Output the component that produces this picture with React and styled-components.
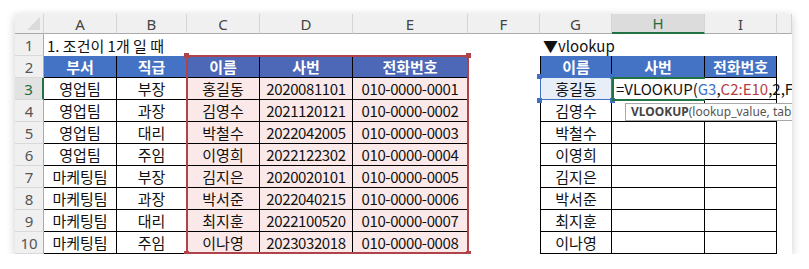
import React from 'react'
import styled, { createGlobalStyle, css } from 'styled-components'

const GlobalStyle = createGlobalStyle`
  body {
    margin: 0;
    background: #fff;
    font-family: "Noto Sans CJK KR", "Noto Sans", sans-serif;
  }
`

const COLS = [29, 73, 70, 73, 93, 115, 72, 72, 93, 72, 15]
const LETTERS = ['A', 'B', 'C', 'D', 'E', 'F', 'G', 'H', 'I', '']

const people = [
  ['영업팀', '부장', '홍길동', '2020081101', '010-0000-0001'],
  ['영업팀', '과장', '김영수', '2021120121', '010-0000-0002'],
  ['영업팀', '대리', '박철수', '2022042005', '010-0000-0003'],
  ['영업팀', '주임', '이영희', '2022122302', '010-0000-0004'],
  ['마케팅팀', '부장', '김지은', '2020020101', '010-0000-0005'],
  ['마케팅팀', '과장', '박서준', '2022040215', '010-0000-0006'],
  ['마케팅팀', '대리', '최지훈', '2022100520', '010-0000-0007'],
  ['마케팅팀', '주임', '이나영', '2023032018', '010-0000-0008'],
]

// every grid item sits at its own row / column
const placed = css`
  grid-column: ${({ $col }) => $col};
  grid-row: ${({ $row }) => $row};
`

const Frame = styled.div`
  margin: 14px 0 0 15px;
  width: 777px;
  height: 240px;
  overflow: hidden;
  background: #fff;
  box-shadow: 0 2px 9px rgba(0, 0, 0, 0.2);
`

const Sheet = styled.div`
  display: grid;
  grid-template-columns: ${COLS.map((c) => c + 'px').join(' ')};
  grid-template-rows: 20px repeat(10, 22px);
  font-size: 15px;
  color: #111;
`

const Corner = styled.div`
  ${placed}
  position: relative;
  background: #f0f0f0;
  border-right: 1px solid #d4d4d4;
  border-bottom: 1px solid #ababab;
  &::after {
    content: '';
    position: absolute;
    right: 3px;
    bottom: 3px;
    border-left: 13px solid transparent;
    border-bottom: 13px solid #dadada;
  }
`

const ColHead = styled.div`
  ${placed}
  display: flex;
  align-items: center;
  justify-content: center;
  font-family: "Noto Sans", sans-serif;
  font-size: 15px;
  color: ${({ $active }) => ($active ? '#1e6b3f' : '#444')};
  background: ${({ $active }) => ($active ? '#dcdcdc' : '#f0f0f0')};
  border-right: 1px solid #d4d4d4;
  border-bottom: ${({ $active }) => ($active ? '2px solid #217346' : '1px solid #ababab')};
  box-sizing: border-box;
`

const RowHead = styled.div`
  ${placed}
  display: flex;
  align-items: center;
  justify-content: center;
  font-family: "Noto Sans", sans-serif;
  font-size: 15px;
  color: ${({ $active }) => ($active ? '#1e6b3f' : '#555')};
  background: ${({ $active }) => ($active ? '#e2e2e2' : '#f0f0f0')};
  border-bottom: 1px solid #d9d9d9;
  border-right: ${({ $active }) => ($active ? '2px solid #217346' : '1px solid #ababab')};
  box-sizing: border-box;
`

const Cell = styled.div`
  ${placed}
  display: flex;
  align-items: center;
  justify-content: ${({ $left }) => ($left ? 'flex-start' : 'center')};
  padding: 0 ${({ $left }) => ($left ? '3px' : '0')};
  white-space: nowrap;
  box-sizing: border-box;
  line-height: 1;
  letter-spacing: ${({ $num }) => ($num ? '-0.4px' : '0')};
  background: ${({ $bg }) => $bg || 'transparent'};
  color: ${({ $head }) => ($head ? '#fff' : '#111')};
  font-weight: ${({ $head }) => ($head ? 700 : 400)};
  border-right: ${({ $line }) => ($line ? '1px solid #000' : 'none')};
  border-bottom: ${({ $line }) => ($line ? '1px solid #000' : 'none')};
  border-left: ${({ $edge }) => ($edge ? '1px solid #000' : 'none')};
`

const FormulaCell = styled.div`
  grid-column: 9 / span 2;
  grid-row: 4;
  display: flex;
  align-items: center;
  padding-left: 4px;
  white-space: nowrap;
  line-height: 1;
  border-bottom: 1px solid #000;
  border-right: 1px solid #000;
  box-sizing: border-box;
  position: relative;
  z-index: 2;
`

const Ref = styled.span`
  color: ${({ $c }) => $c};
`

const Overlay = styled.div`
  ${placed}
  position: relative;
  pointer-events: none;
  z-index: 3;
  margin: ${({ $inset }) => $inset || '0'};
  border: ${({ $border }) => $border};
  ${({ $open }) => $open && 'border-right: none;'}
`

const Handle = styled.span`
  position: absolute;
  width: 5px;
  height: 5px;
  background: ${({ $c }) => $c};
  ${({ $v }) => $v}: -4px;
  ${({ $h }) => $h}: -4px;
`

const Tip = styled.div`
  position: absolute;
  left: 13px;
  top: 25px;
  height: 16px;
  display: flex;
  align-items: center;
  padding: 0 5px;
  background: #fff;
  border: 1px solid #a9a9a9;
  font-family: "Noto Sans", sans-serif;
  font-size: 12px;
  color: #555;
  white-space: nowrap;
  b {
    color: #444;
  }
`

const corners = [
  ['top', 'left'],
  ['top', 'right'],
  ['bottom', 'left'],
  ['bottom', 'right'],
]

const App = () => {
  const headers = ['부서', '직급', '이름', '사번', '전화번호']
  const lookup = ['홍길동', '김영수', '박철수', '이영희', '김지은', '박서준', '최지훈', '이나영']

  const cells = []
  cells.push(<Corner key="corner" $col={1} $row={1} />)
  LETTERS.forEach((l, i) =>
    cells.push(
      <ColHead key={'h' + i} $col={i + 2} $row={1} $active={l === 'H'}>
        {l}
      </ColHead>
    )
  )

  for (let r = 1; r <= 10; r++) {
    const row = r + 1
    cells.push(
      <RowHead key={'r' + r} $col={1} $row={row} $active={r === 3}>
        {r}
      </RowHead>
    )
    for (let c = 0; c < 10; c++) {
      const key = r + '-' + c
      const pos = { $col: c + 2, $row: row }
      if (r === 1) {
        if (c === 0) cells.push(<Cell key={key} {...pos} $left>1. 조건이 1개 일 때</Cell>)
        else if (c === 6) cells.push(<Cell key={key} {...pos} $left>▼vlookup</Cell>)
        continue
      }
      const pink = c >= 2 && c <= 4
      if (c <= 4) {
        if (r === 2) {
          cells.push(
            <Cell key={key} {...pos} $line $head $bg={pink ? '#4d68b6' : '#4472c4'}>
              {headers[c]}
            </Cell>
          )
        } else {
          cells.push(
            <Cell key={key} {...pos} $line $num={c >= 3} $bg={pink ? '#fbe9e9' : null}>
              {people[r - 3][c]}
            </Cell>
          )
        }
      } else if (c >= 6 && c <= 8) {
        if (r === 2) {
          cells.push(
            <Cell key={key} {...pos} $line $edge={c === 6} $head $bg="#4472c4">
              {['이름', '사번', '전화번호'][c - 6]}
            </Cell>
          )
        } else if (r === 3 && c === 7) {
          cells.push(
            <FormulaCell key={key}>
              =VLOOKUP(<Ref $c="#3d6fc4">G3</Ref>,<Ref $c="#b63f46">C2:E10</Ref>,2,FALSE)
              <Tip>
                <b>VLOOKUP</b>(lookup_value, table_array, col_index_num, [range_lookup])
              </Tip>
            </FormulaCell>
          )
        } else if (r === 3 && c === 8) {
          continue
        } else if (c === 6) {
          cells.push(
            <Cell key={key} {...pos} $line $edge $bg={r === 3 ? '#e7eef8' : null}>
              {lookup[r - 3]}
            </Cell>
          )
        } else {
          cells.push(<Cell key={key} {...pos} $line />)
        }
      }
    }
  }

  return (
    <>
      <GlobalStyle />
      <Frame>
        <Sheet>
          {cells}
          <Overlay $col="4 / span 3" $row="3 / span 9" $inset="-1px -1px 0 -1px" $border="2px solid #b0424a">
            {corners.map(([v, h]) => (
              <Handle key={v + h} $v={v} $h={h} $c="#b0424a" />
            ))}
          </Overlay>
          <Overlay $col="8" $row="4" $inset="-1px 0 0 0" $border="1.5px solid #4472c4">
            {corners.map(([v, h]) => (
              <Handle key={v + h} $v={v} $h={h} $c="#3e6fc6" />
            ))}
          </Overlay>
          <Overlay $col="9" $row="4" $inset="-1px 0 -1px 0" $border="2px solid #217346" $open />
        </Sheet>
      </Frame>
    </>
  )
}

export default App
